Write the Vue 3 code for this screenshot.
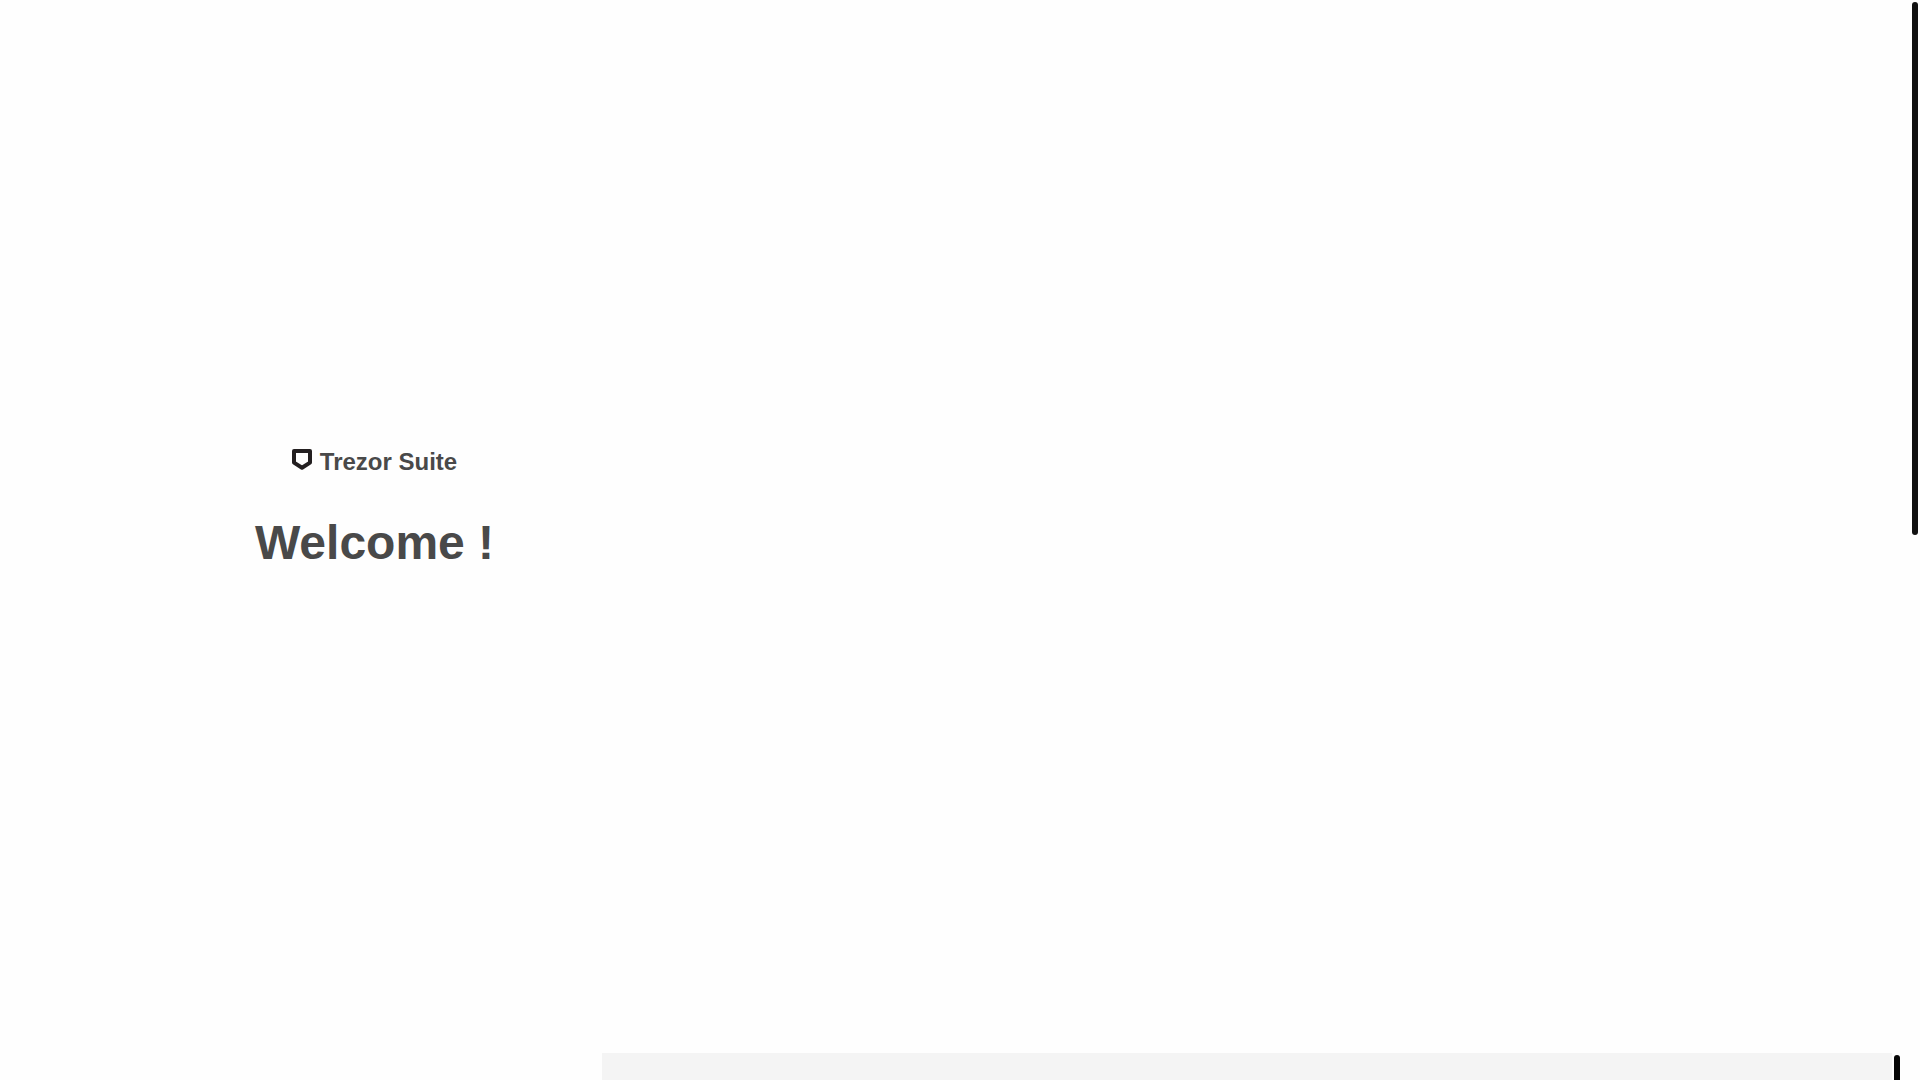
<script setup>
const product = 'Trezor Suite'
const greeting = 'Welcome !'
</script>

<template>
  <div class="page">
    <main class="layout">
      <section class="intro">
        <div class="brand">
          <svg class="logo" viewBox="0 0 20 21" aria-hidden="true">
            <path
              d="M2 2H18V13.6L10 18.7L2 13.6Z"
              fill="none"
              stroke="#231f20"
              stroke-width="4"
              stroke-linejoin="round"
            />
          </svg>
          <span>{{ product }}</span>
        </div>
        <h1 class="greeting">{{ greeting }}</h1>
      </section>
      <section class="content">
        <div class="panel">
          <div class="surface"></div>
          <div class="track" aria-hidden="true">
            <div class="thumb inner"></div>
          </div>
        </div>
      </section>
    </main>
    <div class="track" aria-hidden="true">
      <div class="thumb outer"></div>
    </div>
  </div>
</template>

<style>
body {
  margin: 0;
  background: #fefefe;
}
</style>

<style scoped>
.page {
  display: flex;
  gap: 8px;
  min-height: 100vh;
  background: #fefefe;
  color: #494949;
  font-family: "Liberation Sans", Arial, sans-serif;
}

.layout {
  flex: 1;
  display: grid;
  grid-template-columns: 602fr 1300fr;
}

.intro {
  box-sizing: border-box;
  display: flex;
  flex-direction: column;
  align-items: center;
  justify-content: center;
  gap: 39px;
  padding: 0 0 61px 147px;
}

.brand {
  display: flex;
  align-items: flex-start;
  gap: 8px;
  font-size: 24px;
  font-weight: 700;
  line-height: 28px;
}

.logo {
  width: 20px;
  height: 21px;
  margin-top: 1px;
}

.greeting {
  margin: 0;
  font-size: 48px;
  font-weight: 700;
  line-height: 56px;
}

.content {
  display: flex;
  flex-direction: column;
  justify-content: flex-end;
}

.panel {
  display: flex;
  height: 27px;
}

.surface {
  flex: 1;
  background: #f4f4f4;
}

.track {
  box-sizing: border-box;
  display: flex;
  flex-direction: column;
  width: 10px;
  padding: 2px 2px 0;
}

.thumb {
  background: #111111;
}

.outer {
  height: 533px;
  border-radius: 3px;
}

.inner {
  flex: 1;
  background: #060606;
  border-radius: 3px 3px 0 0;
}
</style>
